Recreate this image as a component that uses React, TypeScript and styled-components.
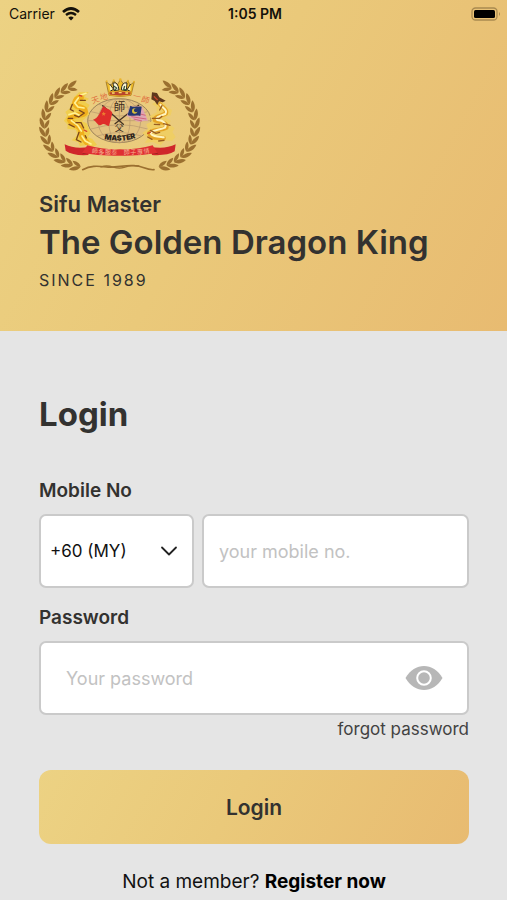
import React, { useState } from "react";
import styled, { createGlobalStyle } from "styled-components";

const gold = "linear-gradient(118deg, #ecd283 0%, #eac97a 45%, #e8bb71 100%)";
const ink = "#333230";

const GlobalStyle = createGlobalStyle`
  *, *::before, *::after { box-sizing: border-box; }
  html, body { margin: 0; background: #e5e5e5; }
  body, input, select, button { font-family: Inter, "Noto Sans CJK TC", sans-serif; }
`;

const Page = styled.main`
  min-height: 100vh;
  background: #e5e5e5;
  color: ${ink};
`;

const Hero = styled.header`
  background: ${gold};
  padding-bottom: 41px;
`;

const StatusBar = styled.div`
  display: grid;
  grid-template-columns: 1fr auto 1fr;
  align-items: center;
  height: 28px;
  padding: 0 6px 0 9px;
  color: #14110a;
  font-size: 14px;
  line-height: 20px;
`;

const Carrier = styled.div`
  display: flex;
  align-items: center;
  gap: 7px;
`;

const Clock = styled.time`
  font-weight: 600;
`;

const BatterySlot = styled.div`
  display: flex;
  justify-content: flex-end;
`;

const Brand = styled.div`
  display: flex;
  flex-direction: column;
  align-items: flex-start;
  padding: 50px 39px 0;
`;

const Owner = styled.p`
  margin: 16px 0 0;
  font-size: 22px;
  line-height: 28px;
  font-weight: 600;
`;

const Title = styled.h1`
  margin: 4px 0 0;
  font-size: 33px;
  line-height: 40px;
  font-weight: 600;
  white-space: nowrap;
`;

const Since = styled.p`
  margin: 8px 0 0;
  font-size: 16px;
  line-height: 20px;
  letter-spacing: 2px;
`;

const Form = styled.form`
  display: flex;
  flex-direction: column;
  padding: 61px 38px 0 39px;
`;

const Heading = styled.h2`
  margin: 0 0 43px;
  font-size: 33px;
  line-height: 44px;
  font-weight: 700;
`;

const Label = styled.label`
  margin-bottom: 11px;
  font-size: 19px;
  line-height: 24px;
  font-weight: 600;
`;

const PhoneRow = styled.div`
  display: grid;
  grid-template-columns: minmax(0, 155fr) minmax(0, 267fr);
  gap: 8px;
  margin-bottom: 18px;
`;

const Field = styled.div`
  display: flex;
  align-items: center;
  height: 74px;
  border: 2px solid #cacaca;
  border-radius: 7px;
  background: #fff;
`;

const SelectField = styled(Field)`
  display: grid;
  grid-template-columns: 1fr 32px;
  grid-template-rows: 100%;
  & > * { grid-row: 1; }
  & > svg { grid-column: 2; pointer-events: none; }
`;

const Select = styled.select`
  grid-column: 1 / -1;
  width: 100%;
  height: 100%;
  padding: 0 36px 0 9px;
  border: 0;
  border-radius: 6px;
  background: transparent;
  appearance: none;
  color: #111;
  font-size: 17px;
`;

const Input = styled.input<{ $inset: number }>`
  flex: 1;
  min-width: 0;
  height: 100%;
  padding: 0 0 0 ${(p) => p.$inset}px;
  border: 0;
  border-radius: 6px;
  background: transparent;
  color: ${ink};
  font-size: 18px;
  &::placeholder { color: #c2c2c2; opacity: 1; }
`;

const EyeButton = styled.button`
  display: flex;
  margin-right: 24px;
  padding: 0;
  border: 0;
  background: none;
  cursor: pointer;
`;

const Forgot = styled.a`
  align-self: flex-end;
  margin-top: 3px;
  color: #424242;
  font-size: 17px;
  line-height: 22px;
  text-decoration: none;
`;

const Submit = styled.button`
  height: 74px;
  margin-top: 30px;
  border: 0;
  border-radius: 12px;
  background: ${gold};
  color: ${ink};
  font-size: 21px;
  font-weight: 600;
  cursor: pointer;
`;

const Register = styled.p`
  margin: 26px 0 0;
  padding-bottom: 5px;
  color: #111;
  font-size: 19px;
  line-height: 24px;
  text-align: center;
  a { color: #000; font-weight: 700; text-decoration: none; }
`;

function Wreath() {
  const leaves = Array.from({ length: 14 }, (_, i) => {
    const angle = 108 + i * 11.6;
    const t = (angle * Math.PI) / 180;
    return { x: 162 + 118 * Math.cos(t), y: 168 - 122 * Math.sin(t), turn: 90 - angle };
  });
  return (
    <g fill="#9b7030">
      {leaves.map((leaf, i) => (
        <g key={i} transform={`translate(${leaf.x} ${leaf.y}) rotate(${leaf.turn})`}>
          <path d="M-13 0C-9 -12 5 -18 20 -15C15 -6 2 1 -13 0Z" />
          <path d="M-13 0C-4 -3 9 3 14 13C3 15 -9 10 -13 0Z" />
        </g>
      ))}
    </g>
  );
}

function GoldenDragon() {
  return (
    <g strokeLinecap="round" strokeLinejoin="round" fill="none">
      <path d="M176 66L147 67L132 82L136 91L120 103L121 114L106 126L112 136L102 152L113 164L112 176L137 179L143 194L125 211L145 217L150 229L171 224L188 232L201 224L187 207L173 201L182 189L170 160L156 154L179 133L170 119L179 105L165 96L177 86L163 80Z" fill="#f0cd4d" />
      <path d="M153 82C137 86 129 99 140 108C151 114 166 112 166 126C164 138 138 131 123 142M119 149C124 162 142 164 151 176L156 199L170 217" stroke="#efaf1d" strokeWidth="17" />
      <path d="M151 76L168 70M145 84L134 99L144 111L162 114M117 134L135 129L151 137M124 152L143 166L154 183M156 198L166 213L183 222" stroke="#fff295" strokeWidth="5" />
      <path d="M151 91L166 91M127 103L121 118L130 123M148 121L163 129L146 141L134 136M115 145L128 145M117 163L133 171M138 158L153 158L161 174M147 187L139 209L153 216M166 197L169 204" stroke="#7b461a" strokeWidth="4" />
      <path d="M148 76L155 78M162 180L170 184" stroke="#d5472b" strokeWidth="4" />
    </g>
  );
}

function SilverDragon() {
  return (
    <g strokeLinecap="round" strokeLinejoin="round" fill="none">
      <path d="M389 90L405 101L409 111L426 120L422 136L405 142L422 152L418 163L434 175L427 186L437 201L426 213L405 211L392 226L368 216L344 219L354 205L337 189L354 176L349 163L366 153L359 138L380 127L379 110L366 102Z" fill="#efce64" />
      <path d="M390 103C401 116 412 118 408 130C394 139 372 139 375 151C391 158 413 155 409 173C392 183 373 176 358 189C360 207 384 202 401 204" stroke="#e4a426" strokeWidth="13" />
      <path d="M391 104C400 116 414 121 406 132C390 138 374 142 382 150C402 151 411 162 405 173C387 180 374 178 362 188C365 200 386 200 401 202" stroke="#fff5bf" strokeWidth="6" />
      <path d="M366 67L381 69L388 82L407 92L398 97L387 94L382 105L374 93L364 88Z" fill="#5e371c" />
      <path d="M396 107L389 120M367 145L389 145L396 139M401 161L420 166M373 163L389 164M361 181L378 190L389 187M386 213L402 211M353 201L366 208" stroke="#985d21" strokeWidth="4" />
      <path d="M373 80L382 89M353 190L361 187" stroke="#c7442b" strokeWidth="4" />
    </g>
  );
}

function Crest() {
  return (
    <svg width="162" height="96" viewBox="27 24 486 288" role="img" aria-label="Sifu Master crest">
      <Wreath />
      <g transform="matrix(-1 0 0 1 538 0)"><Wreath /></g>
      <g fill="none" stroke="#9b7030" strokeLinecap="round">
        <path d="M158 299C181 287 200 287 229 291C256 295 284 284 314 287C340 288 347 301 372 299" strokeWidth="5" />
        <path d="M213 291C243 279 255 302 282 292C294 287 307 285 326 288" strokeWidth="4" />
      </g>
      <ellipse cx="268" cy="152" rx="95" ry="66" fill="#e3c280" stroke="#9c8359" strokeWidth="3" />
      <g fill="none" stroke="#b7976c" strokeWidth="2">
        <ellipse cx="268" cy="152" rx="64" ry="66" />
        <ellipse cx="268" cy="152" rx="32" ry="66" />
        <path d="M268 86V218M174 152H362M183 125Q268 151 353 125M183 177Q268 151 353 177M206 103Q268 124 330 103M201 198Q268 177 335 198" />
      </g>
      <GoldenDragon />
      <SilverDragon />
      <g>
        <path d="M237 76L228 35L243 47L251 31L262 45L271 29L282 44L294 32L300 46L313 35L303 76Q270 83 237 76Z" fill="#efbd2a" stroke="#89601a" strokeWidth="2" />
        <path d="M239 42L251 58L240 64M302 42L291 59L301 64" fill="#fff6bc" stroke="#392c1c" strokeWidth="3" />
        <path d="M249 39Q264 34 267 60L252 62ZM274 60Q275 35 291 39L289 62Z" fill="#fff7d4" stroke="#2e281c" strokeWidth="3" />
        <path d="M236 66Q270 60 304 66L302 75Q270 81 238 75Z" fill="#b8442c" stroke="#e4aa25" strokeWidth="3" />
        <path d="M251 48L260 54L254 60M284 48L281 58L290 60" fill="none" stroke="#3b5a40" strokeWidth="4" />
        <g fill="#e9b52d"><circle cx="230" cy="34" r="3" /><circle cx="251" cy="31" r="3" /><circle cx="271" cy="29" r="4" /><circle cx="294" cy="32" r="3" /><circle cx="312" cy="35" r="3" /></g>
        <path d="M246 69H254M266 68H275M286 69H294" stroke="#f9df6c" strokeWidth="4" />
      </g>
      <path d="M218 107L280 163M326 106L255 161" stroke="#463323" strokeWidth="4" strokeLinecap="round" />
      <path d="M220 108C229 117 241 116 247 129L237 168C224 165 225 157 211 166C203 166 199 154 189 149C205 145 207 132 220 108Z" fill="#df2e2b" />
      <path d="M221 125L223 129L228 130L224 133L225 137L221 135L217 137L218 133L215 130L219 129Z" fill="#ed7c2f" />
      <path d="M301 108C315 113 320 106 336 110L354 153C335 149 331 160 317 152L290 137Z" fill="#dfa5b3" />
      <path d="M330 132L347 136M304 140L349 147M311 147L336 153" stroke="#cf647c" strokeWidth="3" />
      <path d="M301 107C312 114 322 108 335 110L331 138C313 134 307 141 293 135Z" fill="#25376f" />
      <circle cx="314" cy="123" r="8" fill="#d5bd3c" />
      <circle cx="318" cy="121" r="6" fill="#25376f" />
      <g fontFamily='"Noto Sans CJK TC", sans-serif' textAnchor="middle">
        <text x="268" y="124" fontSize="34" fill="#3b2b1d">師</text>
        <text x="268" y="183" fontSize="27" fill="#3b2b1d">父</text>
        <g fontSize="24" fill="#e0703f">
          <text transform="translate(199 98) rotate(-20)">天</text>
          <text transform="translate(223 89) rotate(-12)">地</text>
          <text transform="translate(319 88) rotate(12)">一</text>
          <text transform="translate(344 98) rotate(18)">師</text>
        </g>
      </g>
      <path id="master-curve" d="M214 205Q270 221 326 201" fill="none" />
      <text fontFamily="Inter, sans-serif" fontSize="22" fontWeight="900" fill="#2b2118" textAnchor="middle">
        <textPath href="#master-curve" startOffset="50%">MASTER</textPath>
      </text>
      <path d="M104 223Q136 239 180 230L175 255Q129 258 107 242ZM437 223Q404 239 360 230L366 255Q411 258 434 244Z" fill="#cf272b" />
      <path d="M155 253L184 235V248ZM386 253L358 235V248Z" fill="#8d221e" />
      <path d="M172 226Q220 240 270 238Q320 240 368 226L382 249Q322 259 270 257Q215 259 156 249Z" fill="#df3032" />
      <g fontFamily='"Noto Sans CJK TC", sans-serif' fontSize="18" fill="#f6b593" textAnchor="middle">
        <text transform="translate(194 250) rotate(5)">師</text><text x="214" y="252">多</text><text x="234" y="253">服</text><text x="253" y="253">泰</text>
        <text x="290" y="253">師</text><text x="310" y="253">子</text><text x="330" y="252">專</text><text transform="translate(350 250) rotate(-5)">情</text>
      </g>
    </svg>
  );
}

function WifiIcon() {
  return (
    <svg width="18" height="14" viewBox="0 0 18 14" fill="none" stroke="#14110a" aria-label="Wi-Fi">
      <path d="M1 5Q9-2 17 5" strokeWidth="2.7" />
      <path d="M4 8Q9 4 14 8" strokeWidth="2.4" />
      <path d="M9 13.5L6.3 10.7Q9 8.5 11.7 10.7Z" fill="#14110a" stroke="none" />
    </svg>
  );
}

function BatteryIcon() {
  return (
    <svg width="30" height="14" viewBox="0 0 30 14" aria-label="Battery full">
      <rect x="1" y="1" width="25" height="12" rx="3.5" fill="none" stroke="#a98a50" strokeWidth="1.3" />
      <rect x="3" y="3" width="21" height="8" rx="1.5" fill="#000" />
      <path d="M28 5Q30 7 28 9Z" fill="#a98a50" />
    </svg>
  );
}

export default function App() {
  const [visible, setVisible] = useState(false);
  return (
    <Page>
      <GlobalStyle />
      <Hero>
        <StatusBar>
          <Carrier>Carrier <WifiIcon /></Carrier>
          <Clock>1:05 PM</Clock>
          <BatterySlot><BatteryIcon /></BatterySlot>
        </StatusBar>
        <Brand>
          <Crest />
          <Owner>Sifu Master</Owner>
          <Title>The Golden Dragon King</Title>
          <Since>SINCE 1989</Since>
        </Brand>
      </Hero>
      <Form onSubmit={(e) => e.preventDefault()}>
        <Heading>Login</Heading>
        <Label htmlFor="mobile">Mobile No</Label>
        <PhoneRow>
          <SelectField>
            <Select aria-label="Country code" defaultValue="60">
              <option value="60">+60 (MY)</option>
            </Select>
            <svg width="18" height="12" viewBox="0 0 18 12" fill="none" stroke="#222" strokeWidth="1.8" strokeLinecap="round" strokeLinejoin="round" aria-hidden="true">
              <path d="M2 2.5L9 9.5L16 2.5" />
            </svg>
          </SelectField>
          <Field><Input id="mobile" type="tel" placeholder="your mobile no." $inset={15} /></Field>
        </PhoneRow>
        <Label htmlFor="password">Password</Label>
        <Field>
          <Input id="password" type={visible ? "text" : "password"} placeholder="Your password" $inset={25} />
          <EyeButton type="button" aria-label="Show password" aria-pressed={visible} onClick={() => setVisible(!visible)}>
            <svg width="38" height="26" viewBox="0 0 38 26" aria-hidden="true">
              <path d="M0.5 13C5 5 12 1 19 1S33 5 37.5 13C33 21 26 25 19 25S5 21 0.5 13Z" fill="#b7b7b7" />
              <circle cx="19" cy="13" r="6.8" fill="#b7b7b7" stroke="#fff" strokeWidth="2" />
            </svg>
          </EyeButton>
        </Field>
        <Forgot href="#forgot">forgot password</Forgot>
        <Submit type="submit">Login</Submit>
        <Register>Not a member? <a href="#register">Register now</a></Register>
      </Form>
    </Page>
  );
}
